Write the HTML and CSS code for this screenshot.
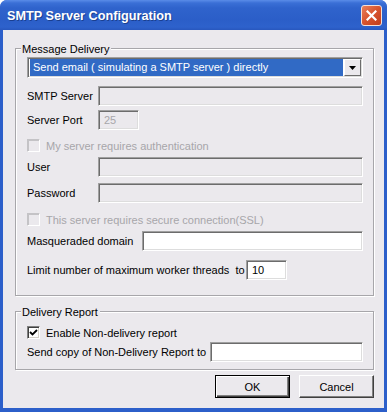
FILE: index.html
```html
<!DOCTYPE html>
<html>
<head>
<meta charset="utf-8">
<link rel="stylesheet" href="styles.css">
</head>
<body>
<div class="window">
  <div class="titlebar">
    <span class="title">SMTP Server Configuration</span>
    <span class="close"><svg width="11" height="11" viewBox="0 0 11 11"><path d="M1.5 1.5 L9.5 9.5 M9.5 1.5 L1.5 9.5" stroke="#fff" stroke-width="2.2" stroke-linecap="square"/></svg></span>
  </div>
  <div class="client">
    <div class="group g1">
      <div class="legend">Message Delivery</div>
      <div class="combo">
        <span class="combo-sel">Send email ( simulating a SMTP server ) directly</span>
        <span class="combo-btn"><svg width="7" height="4" viewBox="0 0 7 4"><path d="M0 0 H7 L3.5 4 Z" fill="#000"/></svg></span>
      </div>
      <div class="row r-smtp"><span class="label l-std">SMTP Server</span><span class="input grow disabled"></span></div>
      <div class="row r-port"><span class="label l-std">Server Port</span><span class="input small disabled"><span class="val dis">25</span></span></div>
      <div class="check r-auth dis"><span class="box disbox"></span><span>My server requires authentication</span></div>
      <div class="row r-user"><span class="label l-std">User</span><span class="input grow disabled"></span></div>
      <div class="row r-pass"><span class="label l-std">Password</span><span class="input grow disabled"></span></div>
      <div class="check r-ssl dis"><span class="box disbox"></span><span>This server requires secure connection(SSL)</span></div>
      <div class="row r-masq"><span class="label l-masq">Masqueraded domain</span><span class="input grow"></span></div>
      <div class="row r-limit"><span class="label l-limit">Limit number of maximum worker threads&nbsp; to</span><span class="input small"><span class="val">10</span></span></div>
    </div>
    <div class="group g2">
      <div class="legend">Delivery Report</div>
      <div class="check r-ndr"><span class="box"><svg width="9" height="9" viewBox="0 0 9 9"><path d="M1 4 L3.5 6.5 L8 2" stroke="#000" stroke-width="1.8" fill="none"/></svg></span><span>Enable Non-delivery report</span></div>
      <div class="row r-copy"><span class="label l-copy">Send copy of Non-Delivery Report to</span><span class="input grow"></span></div>
    </div>
    <div class="buttons">
      <span class="btn default">OK</span>
      <span class="btn">Cancel</span>
    </div>
  </div>
</div>
</body>
</html>
```

FILE: styles.css
```css
html, body {
  margin: 0;
  padding: 0;
  background: #fff;
}
body {
  font-family: "Liberation Sans", Arial, sans-serif;
  font-size: 11px;
  color: #000;
}
.window {
  width: 387px;
  height: 412px;
  display: flex;
  flex-direction: column;
  background: #2c5fca;
  border-radius: 7px 7px 0 0;
  box-sizing: border-box;
  overflow: hidden;
}
.titlebar {
  height: 30px;
  flex: none;
  display: flex;
  align-items: center;
  justify-content: space-between;
  padding: 0 5px 0 7px;
  background: linear-gradient(#5a8ce8 0px, #3a6fd6 3px, #2f63cc 8px, #2b5ec8 20px, #2e62cc 27px, #2857be 30px);
  box-sizing: border-box;
}
.title {
  color: #fff;
  font-weight: bold;
  font-size: 12.7px;
  padding-top: 2px;
  text-shadow: 1px 1px 0 #1a3f8f;
}
.close {
  width: 21px;
  height: 21px;
  box-sizing: border-box;
  border: 1px solid #f4e0d8;
  border-radius: 3px;
  background: linear-gradient(135deg, #e9805c 0%, #d7532d 50%, #c23d1c 100%);
  display: flex;
  align-items: center;
  justify-content: center;
  margin-top: 1px;
}
.client {
  flex: 1;
  margin: 0 3px 4px 3px;
  background: #ebe9ed;
  display: flex;
  flex-direction: column;
  padding-top: 18px;
}
.group {
  margin: 0 10px 0 12px;
  border: 1px solid #a7a6aa;
  box-shadow: inset 1px 1px 0 #fff, 1px 1px 0 #fff;
  display: flex;
  flex-direction: column;
  padding: 8px 10px 0 11px;
  box-sizing: border-box;
}
.g1 {
  height: 248px;
}
.g2 {
  margin-top: 15px;
  height: 59px;
}
.legend {
  align-self: flex-start;
  height: 13px;
  line-height: 13px;
  margin: -14px 0 1px -6px;
  padding: 0 2px 0 1px;
  background: #ebe9ed;
}
.g2 .legend {
  margin-bottom: 7px;
}
.combo {
  height: 21px;
  box-sizing: border-box;
  display: flex;
  background: #fff;
  border-top: 1px solid #a0a0a0;
  border-left: 1px solid #a0a0a0;
  border-right: 1px solid #fff;
  border-bottom: 1px solid #fff;
  box-shadow: inset 1px 1px 0 #6c6c6c, inset -1px -1px 0 #ddd;
  padding: 1px;
}
.combo-sel {
  flex: 1;
  background: #316ac5;
  color: #fff;
  line-height: 17px;
  padding-left: 3px;
  margin: 0 1px;
}
.combo-btn {
  width: 17px;
  box-sizing: border-box;
  background: #ebe9ed;
  border-top: 1px solid #fff;
  border-left: 1px solid #fff;
  border-right: 1px solid #6c6c6c;
  border-bottom: 1px solid #6c6c6c;
  display: flex;
  align-items: center;
  justify-content: center;
}
.row {
  display: flex;
  align-items: center;
}
.label {
  flex: none;
  white-space: nowrap;
}
.l-std { width: 71px; }
.l-masq { width: 115px; }
.l-limit { width: 219px; }
.l-copy { width: 183px; }
.input {
  height: 20px;
  box-sizing: border-box;
  background: #fff;
  border-top: 1px solid #a0a0a0;
  border-left: 1px solid #a0a0a0;
  border-right: 1px solid #fff;
  border-bottom: 1px solid #fff;
  box-shadow: inset 1px 1px 0 #6c6c6c, inset -1px -1px 0 #ddd;
  display: flex;
  align-items: center;
  padding-left: 5px;
}
.input.disabled {
  background: #ebe9ed;
}
.grow { flex: 1; }
.small { width: 41px; }
.val { line-height: 14px; }
.dis { color: #a7a6aa; }
.r-smtp { margin-top: 8px; }
.r-port { margin-top: 4px; }
.check {
  display: flex;
  align-items: center;
  height: 13px;
}
.box {
  width: 13px;
  height: 13px;
  box-sizing: border-box;
  background: #fff;
  border-top: 1px solid #808080;
  border-left: 1px solid #808080;
  border-right: 1px solid #fff;
  border-bottom: 1px solid #fff;
  box-shadow: inset 1px 1px 0 #404040, inset -1px -1px 0 #d4d0c8;
  margin-right: 6px;
  display: flex;
  align-items: center;
  justify-content: center;
}
.disbox {
  background: #ebe9ed;
  border-color: #c4c3c6 #fff #fff #c4c3c6;
  box-shadow: inset 1px 1px 0 #c4c3c6;
}
.r-auth { margin-top: 9px; }
.r-user { margin-top: 5px; }
.r-pass { margin-top: 6px; }
.r-ssl { margin-top: 10px; }
.r-masq { margin-top: 5px; }
.r-limit { margin-top: 9px; }
.r-copy { margin-top: 3px; }
.buttons {
  display: flex;
  justify-content: flex-end;
  gap: 9px;
  margin-top: 5px;
  padding-right: 10px;
}
.btn {
  width: 75px;
  height: 23px;
  box-sizing: border-box;
  background: #ebe9ed;
  border-top: 1px solid #fff;
  border-left: 1px solid #fff;
  border-right: 1px solid #404040;
  border-bottom: 1px solid #404040;
  box-shadow: inset -1px -1px 0 #808080;
  display: flex;
  align-items: center;
  justify-content: center;
}
.btn.default {
  border: 1px solid #000;
  box-shadow: inset 1px 1px 0 #fff, inset -1px -1px 0 #404040, inset -2px -2px 0 #808080;
}
```
